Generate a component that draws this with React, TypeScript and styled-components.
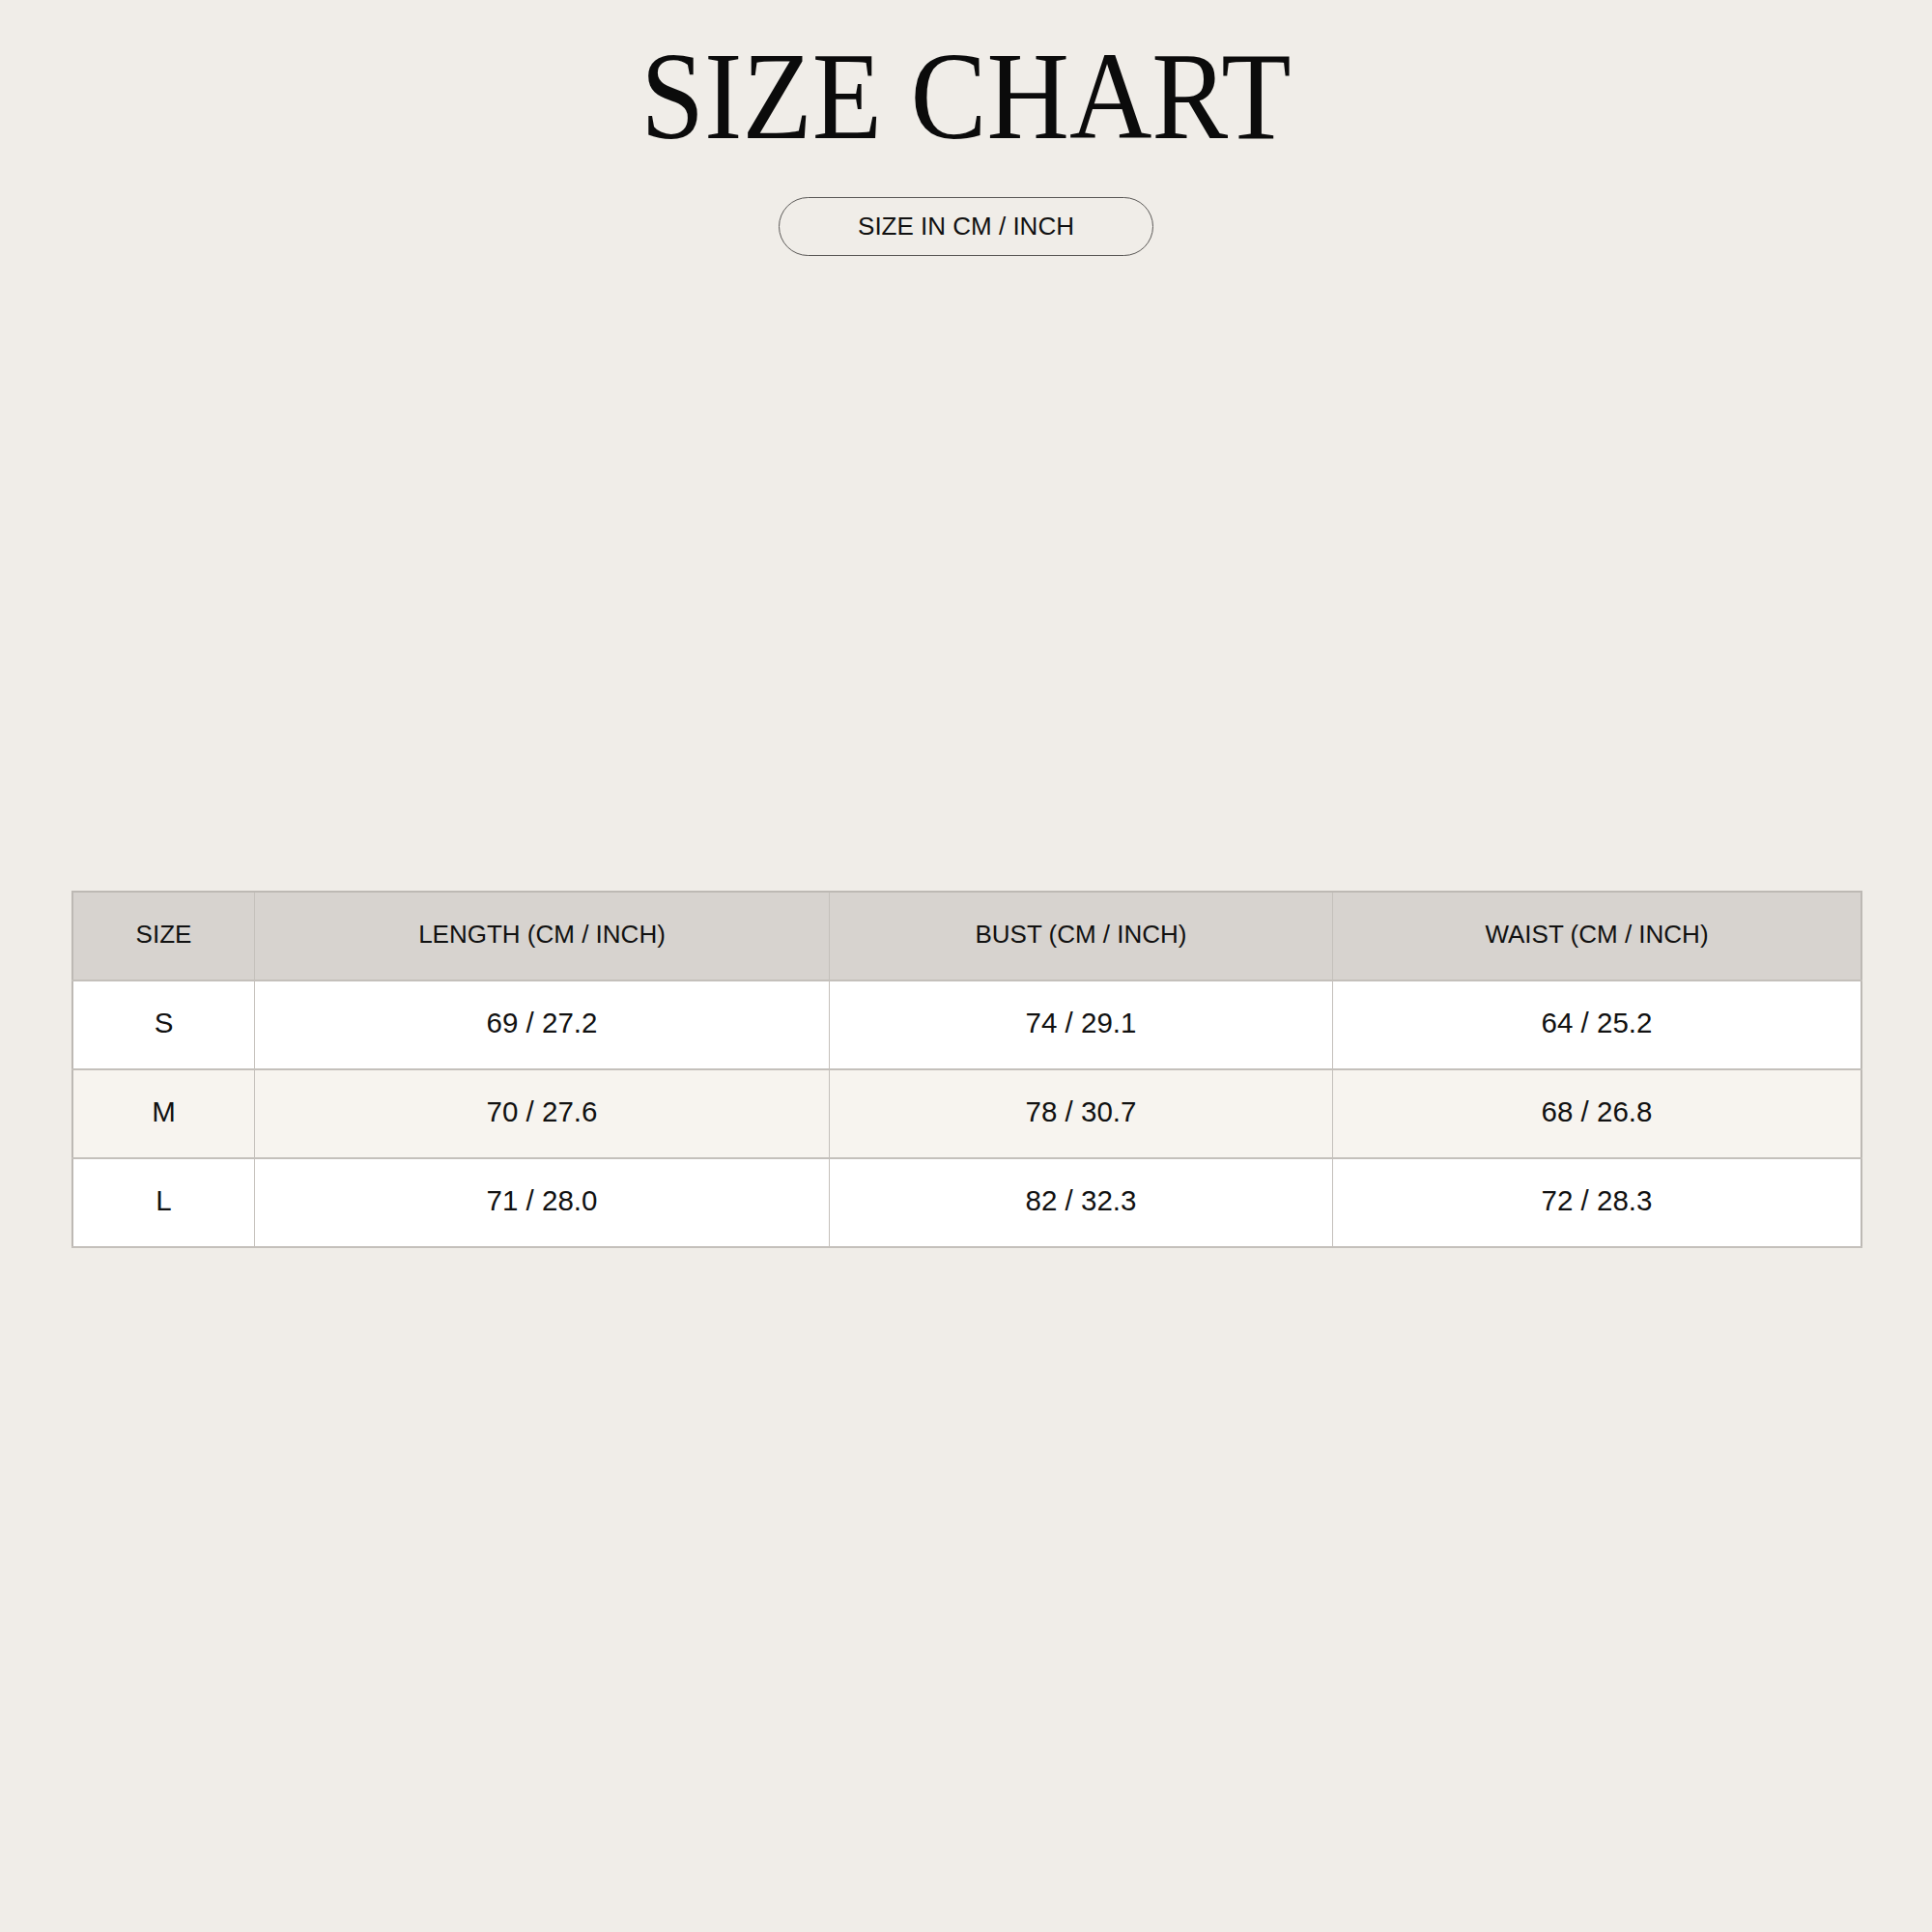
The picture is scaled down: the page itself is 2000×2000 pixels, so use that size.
import React from 'react';
import styled, { createGlobalStyle } from 'styled-components';

const GlobalStyle = createGlobalStyle`
  html, body {
    margin: 0;
    padding: 0;
    background: #f0ede8;
  }
  body {
    font-family: 'Liberation Sans', Arial, sans-serif;
    color: #111;
    width: 2000px;
    min-height: 2000px;
  }
`;

const Page = styled.main`
  display: flex;
  flex-direction: column;
  align-items: center;
  padding: 34px 0 0 0;
`;

const Title = styled.h1`
  margin: 0;
  font-family: 'Liberation Serif', 'Times New Roman', serif;
  font-weight: 400;
  font-size: 130px;
  line-height: 1;
  color: #0b0b0b;
  transform: scaleX(0.91);
  white-space: nowrap;
`;

const UnitPill = styled.div`
  margin-top: 40px;
  width: 388px;
  height: 61px;
  box-sizing: border-box;
  border: 1.5px solid #5a5856;
  border-radius: 31px;
  display: flex;
  align-items: center;
  justify-content: center;
  font-size: 26px;
  color: #111;
`;

const Table = styled.table`
  margin-top: 657px;
  margin-left: 2px;
  width: 1849px;
  border-collapse: collapse;
  table-layout: fixed;
  border: 2px solid #bdb9b4;
`;

const HeadCell = styled.th<{ $w: number }>`
  width: ${({ $w }) => $w}px;
  height: 86px;
  padding: 0 0 4px 0;
  background: #d7d3cf;
  font-weight: 400;
  font-size: 26px;
  text-align: center;
  border-right: 1.5px solid #c4c0bb;
  border-bottom: 2px solid #c4c0bb;
`;

const Row = styled.tr<{ $alt?: boolean }>`
  background: ${({ $alt }) => ($alt ? '#f7f4ef' : '#ffffff')};
`;

const Cell = styled.td`
  height: 86px;
  padding: 0 0 4px 0;
  font-size: 29.5px;
  text-align: center;
  border-right: 1.5px solid #c4c0bb;
  border-bottom: 2px solid #c4c0bb;
`;

const columns = [
  { label: 'SIZE', w: 187 },
  { label: 'LENGTH (CM / INCH)', w: 594 },
  { label: 'BUST (CM / INCH)', w: 520 },
  { label: 'WAIST (CM / INCH)', w: 546 },
];

const rows = [
  ['S', '69 / 27.2', '74 / 29.1', '64 / 25.2'],
  ['M', '70 / 27.6', '78 / 30.7', '68 / 26.8'],
  ['L', '71 / 28.0', '82 / 32.3', '72 / 28.3'],
];

const App: React.FC = () => (
  <>
    <GlobalStyle />
    <Page>
      <Title>SIZE CHART</Title>
      <UnitPill>SIZE IN CM / INCH</UnitPill>
      <Table>
        <thead>
          <tr>
            {columns.map(c => (
              <HeadCell key={c.label} $w={c.w}>{c.label}</HeadCell>
            ))}
          </tr>
        </thead>
        <tbody>
          {rows.map((r, i) => (
            <Row key={r[0]} $alt={i === 1}>
              {r.map((v, j) => (
                <Cell key={j}>{v}</Cell>
              ))}
            </Row>
          ))}
        </tbody>
      </Table>
    </Page>
  </>
);

export default App;
